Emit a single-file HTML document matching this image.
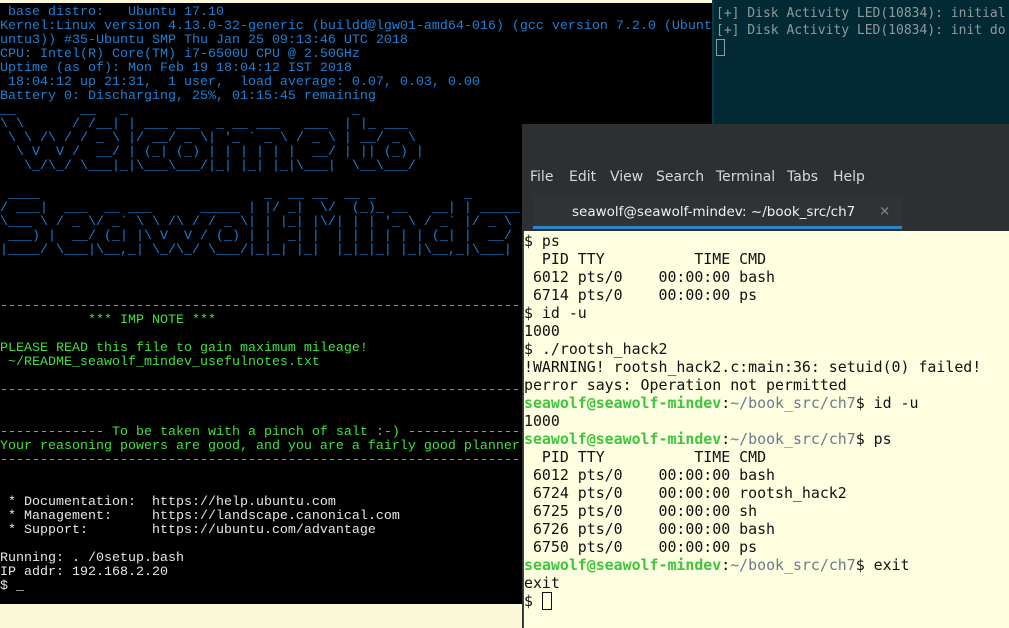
<!DOCTYPE html>
<html><head><meta charset="utf-8"><style>
*{margin:0;padding:0;box-sizing:border-box}
body{width:1009px;height:628px;overflow:hidden;background:#fbf8d8;position:relative}
.lt{position:absolute;left:0;top:3px;width:712px;height:601px;background:#000}
.lt pre{position:absolute;left:0;top:3px;font-family:"Liberation Mono",monospace;font-size:13.33px;line-height:14px;white-space:pre;color:#1c80d4}
.g{color:#3fe03f}.w{color:#e6e6e6}
.tr{position:absolute;left:712px;top:0;width:297px;height:124px;background:#022a35;border-left:2px solid #0a3a44}
.tr pre{font-family:"DejaVu Sans Mono",monospace;font-size:13px;line-height:17px;color:#909a9c;padding:5px 0 0 2px;white-space:pre}
.cur{display:inline-block;width:9px;height:17px;border:1px solid #909a9c;vertical-align:top}
.rw{position:absolute;left:522px;top:124px;width:487px;height:504px;background:#2d3033}
.menu{position:absolute;top:43px;left:0;height:24px;font-family:"DejaVu Sans",sans-serif;font-size:14px;color:#d6d9d6;width:100%}
.menu span{position:absolute;top:2px}
.tab{position:absolute;left:11px;top:72px;width:369px;height:33px;background:#2f3336;border-bottom:3px solid #2a84c6;font-family:"DejaVu Sans",sans-serif;font-size:13.5px;color:#f0f0f0}
.body{position:absolute;left:1px;top:107px;width:486px;height:397px;background:#fefee0;border-left:1px solid #444}
.body pre{font-family:"DejaVu Sans Mono",monospace;font-size:14.9px;line-height:18px;color:#111;white-space:pre;padding:1px 0 0 0}
.p{color:#3ec63e;font-weight:bold}.d{color:#6c7a90}
</style></head><body>
<div class="lt"><pre> base distro:   Ubuntu 17.10
Kernel:Linux version 4.13.0-32-generic (buildd@lgw01-amd64-016) (gcc version 7.2.0 (Ubunt
untu3)) #35-Ubuntu SMP Thu Jan 25 09:13:46 UTC 2018
CPU: Intel(R) Core(TM) i7-6500U CPU @ 2.50GHz
Uptime (as of): Mon Feb 19 18:04:12 IST 2018
 18:04:12 up 21:31,  1 user,  load average: 0.07, 0.03, 0.00
Battery 0: Discharging, 25%, 01:15:45 remaining
__        __   _                            _
\ \      / /__| | ___ ___  _ __ ___   ___  | |_ ___
 \ \ /\ / / _ \ |/ __/ _ \| '_ ` _ \ / _ \ | __/ _ \
  \ V  V /  __/ | (_| (_) | | | | | |  __/ | || (_) |
   \_/\_/ \___|_|\___\___/|_| |_| |_|\___|  \__\___/

 ____                            _  __ __  __ _           _
/ ___|  ___  __ ___      _____ | |/ _|  \/  (_)_ __   __| | _____
\___ \ / _ \/ _` \ \ /\ / / _ \| | |_| |\/| | | '_ \ / _` |/ _ \
 ___) |  __/ (_| |\ V  V / (_) | |  _| |  | | | | | | (_| |  __/
|____/ \___|\__,_| \_/\_/ \___/|_|_| |_|  |_|_|_| |_|\__,_|\___|



<span class="g">-----------------------------------------------------------------
           *** IMP NOTE ***

PLEASE READ this file to gain maximum mileage!
 ~/README_seawolf_mindev_usefulnotes.txt

-----------------------------------------------------------------


------------- To be taken with a pinch of salt :-) --------------
Your reasoning powers are good, and you are a fairly good planner
-----------------------------------------------------------------</span>
<span class="w">

 * Documentation:  https://help.ubuntu.com
 * Management:     https://landscape.canonical.com
 * Support:        https://ubuntu.com/advantage

Running: . /0setup.bash
IP addr: 192.168.2.20
$ _</span></pre></div>
<div class="tr"><pre>[+] Disk Activity LED(10834): initial
[+] Disk Activity LED(10834): init do
<span class="cur"></span></pre></div>
<div class="rw">
<div class="menu"><span style="left:8px">File</span><span style="left:47px">Edit</span><span style="left:88px">View</span><span style="left:134px">Search</span><span style="left:194px">Terminal</span><span style="left:265px">Tabs</span><span style="left:311px">Help</span></div>
<div class="tab"><span style="position:absolute;left:39px;top:8px">seawolf@seawolf-mindev: ~/book_src/ch7</span><span style="position:absolute;left:346px;top:7px;color:#888">×</span></div>
<div class="body"><pre>$ ps
  PID TTY          TIME CMD
 6012 pts/0    00:00:00 bash
 6714 pts/0    00:00:00 ps
$ id -u
1000
$ ./rootsh_hack2
!WARNING! rootsh_hack2.c:main:36: setuid(0) failed!
perror says: Operation not permitted
<span class="p">seawolf@seawolf-mindev</span>:<span class="d">~/book_src/ch7</span>$ id -u
1000
<span class="p">seawolf@seawolf-mindev</span>:<span class="d">~/book_src/ch7</span>$ ps
  PID TTY          TIME CMD
 6012 pts/0    00:00:00 bash
 6724 pts/0    00:00:00 rootsh_hack2
 6725 pts/0    00:00:00 sh
 6726 pts/0    00:00:00 bash
 6750 pts/0    00:00:00 ps
<span class="p">seawolf@seawolf-mindev</span>:<span class="d">~/book_src/ch7</span>$ exit
exit
$ <span style="display:inline-block;width:10px;height:18px;border:1px solid #111;vertical-align:top"></span></pre></div>
</div>
</body></html>
